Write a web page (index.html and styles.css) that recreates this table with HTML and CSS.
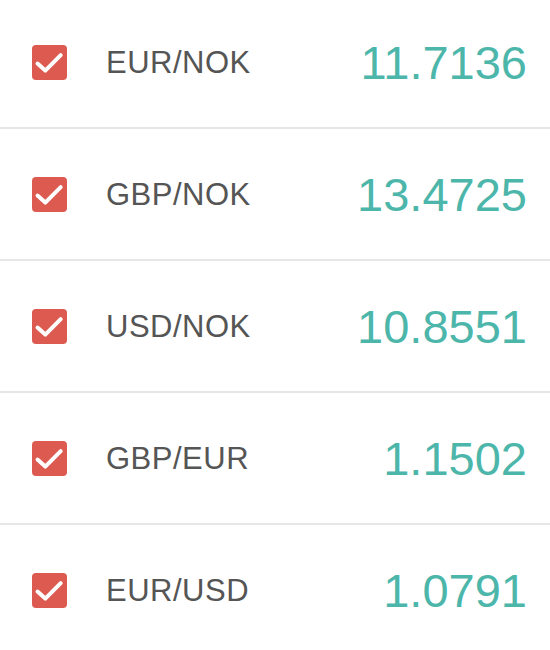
FILE: index.html
```html
<!DOCTYPE html>
<html lang="en">
<head>
<meta charset="utf-8">
<title>Rates</title>
<link rel="stylesheet" href="styles.css">
</head>
<body>
<ul class="rates">
  <li class="rate">
    <span class="check"><svg viewBox="0 0 35 35" width="35" height="35"><path d="M5.5 18.5 L13.3 25.6 L28.7 10.2" /></svg></span>
    <span class="pair">EUR/NOK</span>
    <span class="value">11.7136</span>
  </li>
  <li class="rate">
    <span class="check"><svg viewBox="0 0 35 35" width="35" height="35"><path d="M5.5 18.5 L13.3 25.6 L28.7 10.2" /></svg></span>
    <span class="pair">GBP/NOK</span>
    <span class="value">13.4725</span>
  </li>
  <li class="rate">
    <span class="check"><svg viewBox="0 0 35 35" width="35" height="35"><path d="M5.5 18.5 L13.3 25.6 L28.7 10.2" /></svg></span>
    <span class="pair">USD/NOK</span>
    <span class="value">10.8551</span>
  </li>
  <li class="rate">
    <span class="check"><svg viewBox="0 0 35 35" width="35" height="35"><path d="M5.5 18.5 L13.3 25.6 L28.7 10.2" /></svg></span>
    <span class="pair">GBP/EUR</span>
    <span class="value">1.1502</span>
  </li>
  <li class="rate">
    <span class="check"><svg viewBox="0 0 35 35" width="35" height="35"><path d="M5.5 18.5 L13.3 25.6 L28.7 10.2" /></svg></span>
    <span class="pair">EUR/USD</span>
    <span class="value">1.0791</span>
  </li>
</ul>
</body>
</html>
```
FILE: styles.css
```css
html, body {
  margin: 0;
  padding: 0;
  background: #ffffff;
  overflow: hidden;
}

body {
  font-family: "Liberation Sans", Arial, sans-serif;
}

.rates {
  list-style: none;
  margin: -3px 0 0 0;
  padding: 0;
}

.rate {
  display: flex;
  align-items: center;
  height: 130px;
  border-bottom: 2px solid #e6e6e6;
  padding: 0 23px 0 32px;
}

.check {
  flex: none;
  display: flex;
  width: 35px;
  height: 35px;
  border-radius: 4px;
  background: #dc5a50;
}

.check svg {
  display: block;
}

.check path {
  fill: none;
  stroke: #ffffff;
  stroke-width: 4;
  stroke-linecap: round;
  stroke-linejoin: round;
}

.pair {
  margin: 2px 0 0 39px;
  font-size: 31px;
  letter-spacing: 0.5px;
  color: #555555;
}

.value {
  margin-left: auto;
  font-size: 47px;
  color: #4db6aa;
}
```
